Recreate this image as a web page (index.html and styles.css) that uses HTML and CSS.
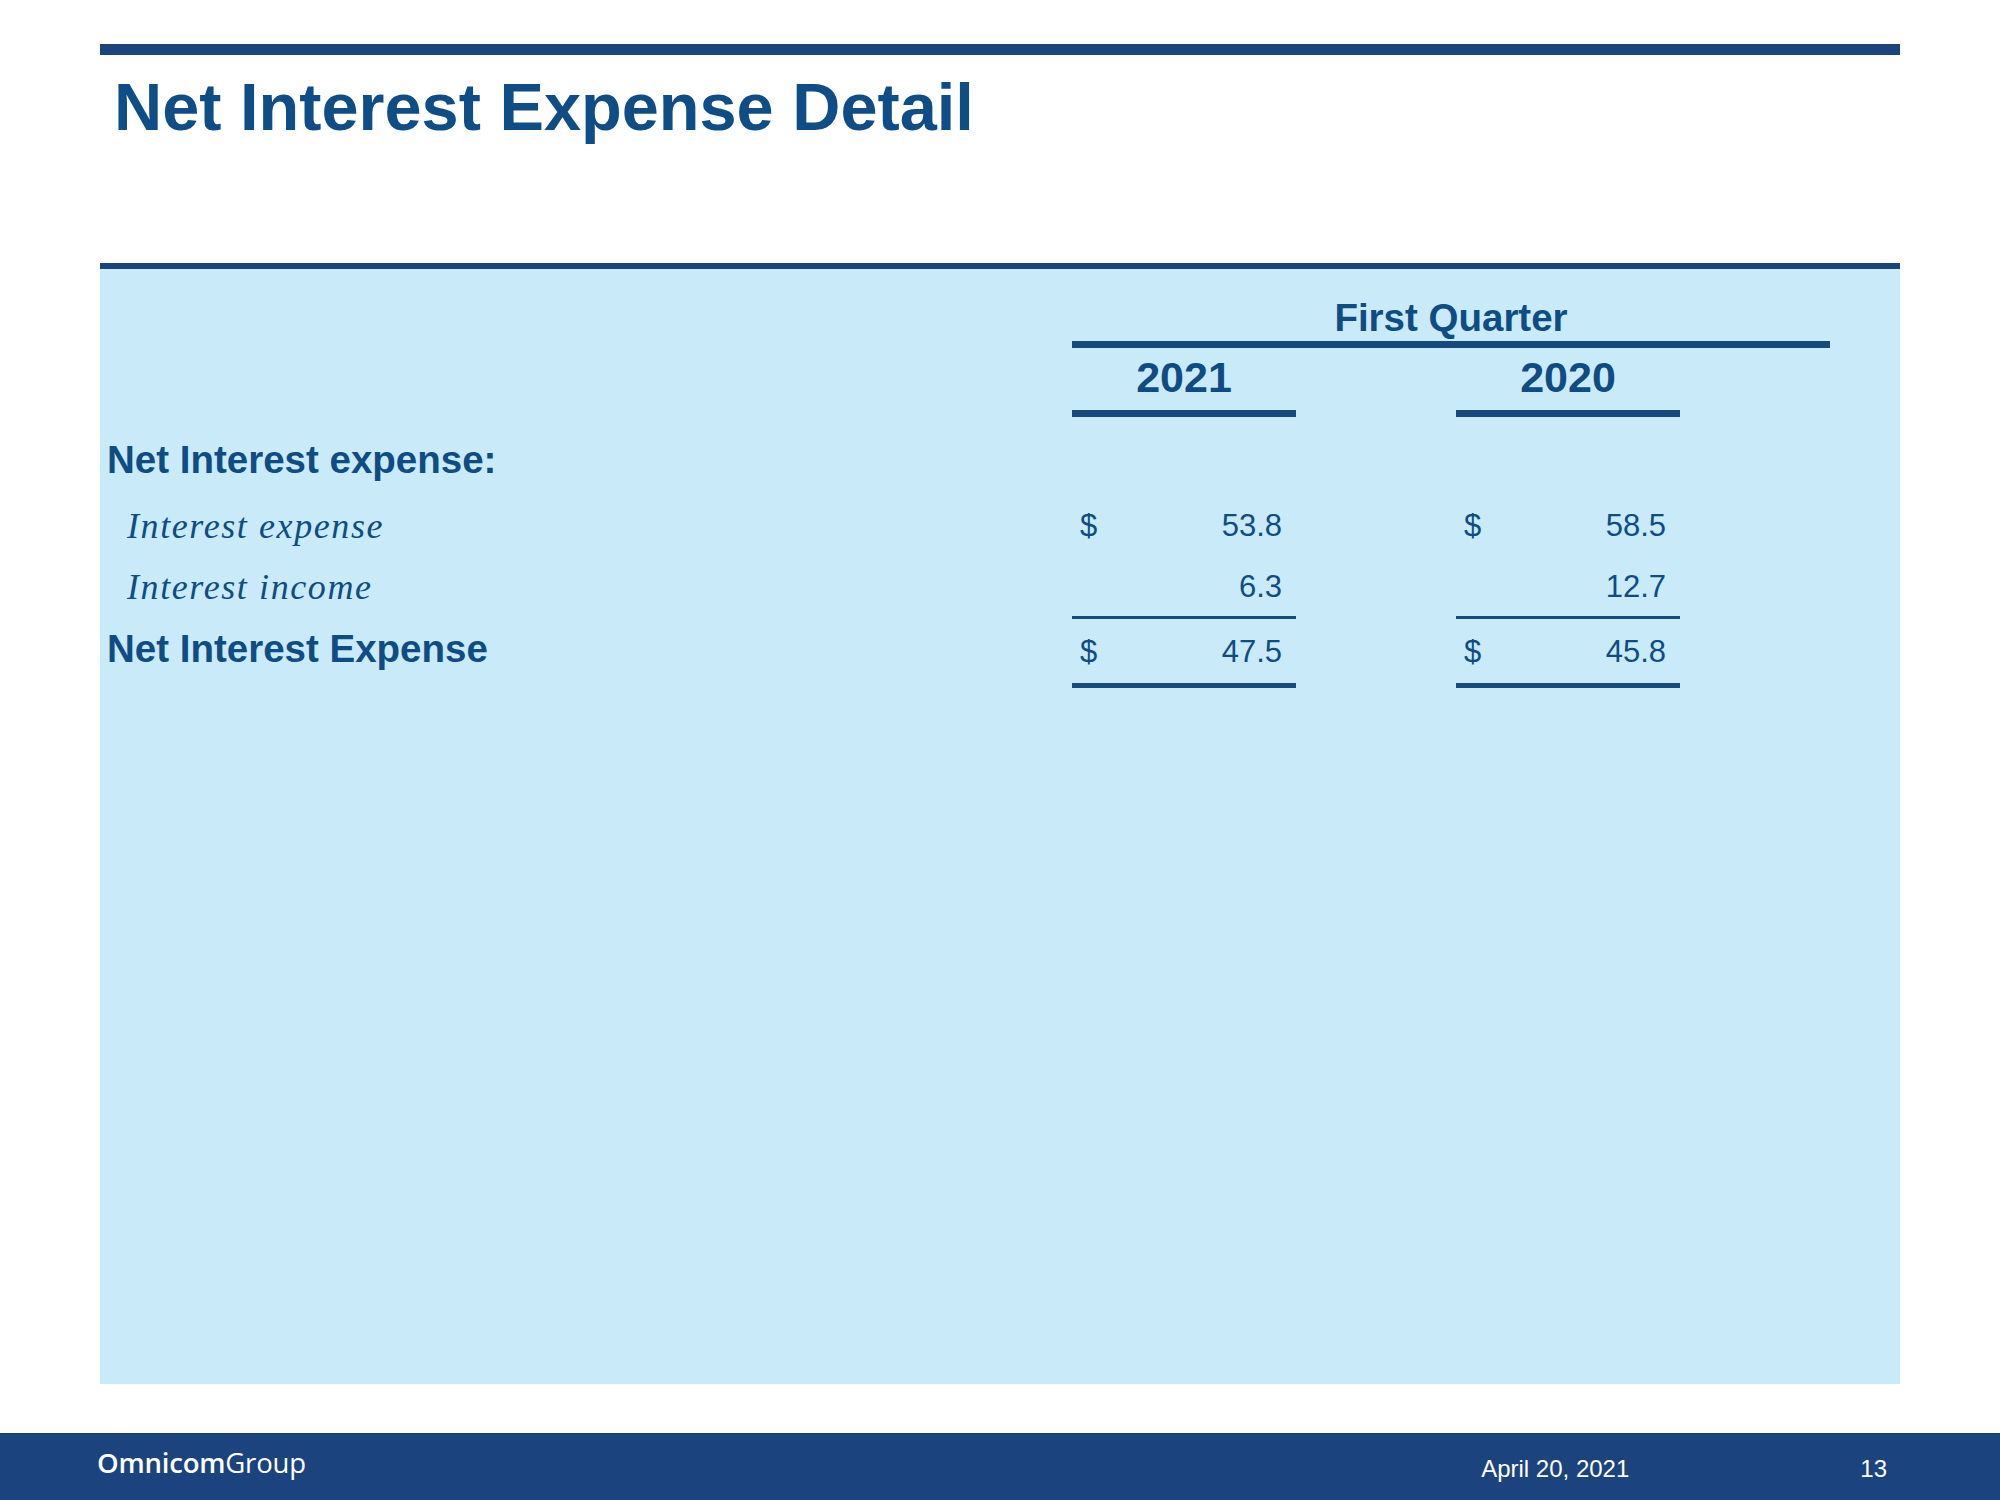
FILE: index.html
```html
<!DOCTYPE html>
<html lang="en">
<head>
<meta charset="utf-8">
<title>Net Interest Expense Detail</title>
<link rel="stylesheet" href="styles.css">
</head>
<body>
<div class="slide">
  <div class="content">
    <div class="top-rule"></div>
    <h1 class="title">Net Interest Expense Detail</h1>
    <section class="panel">
      <div class="row row-head">
        <div class="cell-empty"></div>
        <div class="quarter">First Quarter</div>
      </div>
      <div class="row row-years">
        <div class="cell-empty"></div>
        <div class="year">2021</div>
        <div class="cell-empty"></div>
        <div class="year">2020</div>
      </div>
      <div class="row row-section">
        <div class="label-bold">Net Interest expense:</div>
      </div>
      <div class="row row-d">
        <div class="label-italic">Interest expense</div>
        <div class="num"><span>$</span><span>53.8</span></div>
        <div class="cell-empty"></div>
        <div class="num"><span>$</span><span>58.5</span></div>
      </div>
      <div class="row row-e">
        <div class="label-italic">Interest income</div>
        <div class="num num-sub"><span></span><span>6.3</span></div>
        <div class="cell-empty"></div>
        <div class="num num-sub"><span></span><span>12.7</span></div>
      </div>
      <div class="row row-f">
        <div class="label-bold label-total">Net Interest Expense</div>
        <div class="num num-total"><span>$</span><span>47.5</span></div>
        <div class="cell-empty"></div>
        <div class="num num-total"><span>$</span><span>45.8</span></div>
      </div>
    </section>
  </div>
  <footer class="footer">
    <div class="logo"><span class="logo-bold">Omnicom</span><span class="logo-light">Group</span></div>
    <div class="spacer"></div>
    <div class="date">April 20, 2021</div>
    <div class="page">13</div>
  </footer>
</div>
</body>
</html>
```

FILE: styles.css
```css
html, body {
  margin: 0;
  padding: 0;
  background: #ffffff;
}

.slide {
  width: 2000px;
  height: 1500px;
  position: relative;
  font-family: "Liberation Sans", Arial, sans-serif;
  color: #0f4c84;
  overflow: hidden;
}

.content {
  margin: 0 100px;
  padding-top: 44px;
  height: 1384px;
  box-sizing: border-box;
  display: flex;
  flex-direction: column;
}

.top-rule {
  height: 11px;
  background: #1c4479;
}

.title {
  margin: 18.6px 0 0 0;
  padding-left: 14px;
  font-size: 66.7px;
  line-height: 66.5px;
  font-weight: bold;
  color: #0e4d86;
}

.panel {
  margin-top: 123px;
  flex: 1;
  background: #c9eaf8;
  border-top: 6px solid #1c4479;
}

.row {
  display: grid;
  grid-template-columns: 972px 224px 160px 224px 150px;
}

.cell-empty {
  min-height: 1px;
}

/* First Quarter header */
.quarter {
  grid-column: 2 / 6;
  text-align: center;
  font-weight: bold;
  font-size: 38.5px;
  line-height: 38.5px;
  padding-top: 30.4px;
  padding-bottom: 3px;
  border-bottom: 7px solid #164a7e;
}

/* Year header */
.year {
  text-align: center;
  font-weight: bold;
  font-size: 43px;
  line-height: 43px;
  padding-top: 8px;
  padding-bottom: 11px;
  border-bottom: 7px solid #164a7e;
}

.label-bold {
  font-weight: bold;
  font-size: 38.5px;
  padding-left: 7px;
  white-space: nowrap;
}

.row-section .label-bold {
  line-height: 85.4px;
}

.label-italic {
  font-family: "Liberation Serif", "Times New Roman", serif;
  font-style: italic;
  font-size: 36px;
  line-height: 48px;
  letter-spacing: 1.6px;
  padding-left: 27px;
  white-space: nowrap;
}

.num {
  display: flex;
  justify-content: space-between;
  padding-left: 8px;
  padding-right: 14px;
  font-size: 31px;
  line-height: 48px;
}

.row-e .label-italic {
  padding-top: 12.3px;
}

.num-sub {
  padding-top: 12.3px;
  padding-bottom: 5.7px;
  border-bottom: 3px solid #164a7e;
}

.label-total {
  line-height: 48px;
  padding-top: 5.7px;
}

.num-total {
  padding-top: 8.3px;
  padding-bottom: 7.7px;
  border-bottom: 5px solid #164a7e;
}

/* Footer */
.footer {
  position: absolute;
  left: 0;
  right: 0;
  bottom: 0;
  height: 67px;
  background: #1b437d;
  border-top: 1px solid #163a6e;
  box-sizing: border-box;
  display: flex;
  align-items: flex-start;
  color: #ffffff;
  padding-left: 97px;
  padding-right: 113px;
}

.logo {
  font-family: "Open Sans", "Noto Sans", sans-serif;
  font-size: 27.5px;
  line-height: 27.5px;
  margin-top: 14.6px;
  letter-spacing: -0.2px;
}

.logo-bold {
  font-weight: 600;
}

.logo-light {
  font-weight: 400;
}

.spacer {
  flex: 1;
}

.date, .page {
  font-size: 24px;
  line-height: 24px;
  margin-top: 22.7px;
}

.page {
  margin-left: 231px;
}
```
